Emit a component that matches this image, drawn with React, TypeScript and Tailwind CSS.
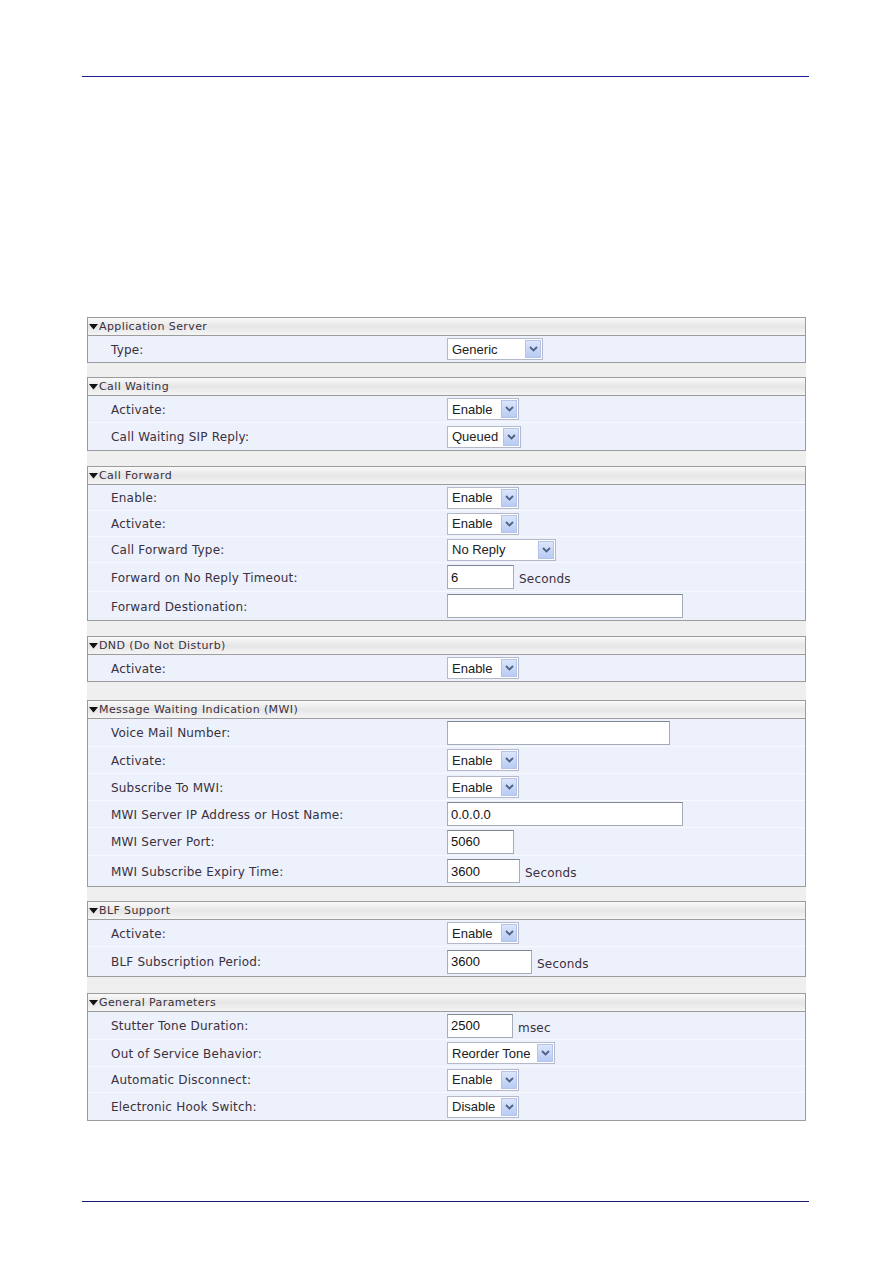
import React from "react";

type Row = {
  label: string;
  kind: "select" | "input";
  value: string;
  w: number;
  h: number;
  suffix?: string;
};

type Section = { title: string; rows: Row[]; gapAfter: number };

const sections: Section[] = [
  {
    title: "Application Server",
    gapAfter: 16,
    rows: [{ label: "Type:", kind: "select", value: "Generic", w: 96, h: 26 }],
  },
  {
    title: "Call Waiting",
    gapAfter: 17,
    rows: [
      { label: "Activate:", kind: "select", value: "Enable", w: 72, h: 27 },
      { label: "Call Waiting SIP Reply:", kind: "select", value: "Queued", w: 74, h: 27 },
    ],
  },
  {
    title: "Call Forward",
    gapAfter: 17,
    rows: [
      { label: "Enable:", kind: "select", value: "Enable", w: 72, h: 26 },
      { label: "Activate:", kind: "select", value: "Enable", w: 72, h: 26 },
      { label: "Call Forward Type:", kind: "select", value: "No Reply", w: 109, h: 26 },
      { label: "Forward on No Reply Timeout:", kind: "input", value: "6", w: 67, h: 29, suffix: "Seconds" },
      { label: "Forward Destionation:", kind: "input", value: "", w: 236, h: 28 },
    ],
  },
  {
    title: "DND (Do Not Disturb)",
    gapAfter: 20,
    rows: [{ label: "Activate:", kind: "select", value: "Enable", w: 72, h: 26 }],
  },
  {
    title: "Message Waiting Indication (MWI)",
    gapAfter: 16,
    rows: [
      { label: "Voice Mail Number:", kind: "input", value: "", w: 223, h: 28 },
      { label: "Activate:", kind: "select", value: "Enable", w: 72, h: 27 },
      { label: "Subscribe To MWI:", kind: "select", value: "Enable", w: 72, h: 27 },
      { label: "MWI Server IP Address or Host Name:", kind: "input", value: "0.0.0.0", w: 236, h: 27 },
      { label: "MWI Server Port:", kind: "input", value: "5060", w: 67, h: 28 },
      { label: "MWI Subscribe Expiry Time:", kind: "input", value: "3600", w: 73, h: 30, suffix: "Seconds" },
    ],
  },
  {
    title: "BLF Support",
    gapAfter: 18,
    rows: [
      { label: "Activate:", kind: "select", value: "Enable", w: 72, h: 27 },
      { label: "BLF Subscription Period:", kind: "input", value: "3600", w: 85, h: 29, suffix: "Seconds" },
    ],
  },
  {
    title: "General Parameters",
    gapAfter: 0,
    rows: [
      { label: "Stutter Tone Duration:", kind: "input", value: "2500", w: 66, h: 28, suffix: "msec" },
      { label: "Out of Service Behavior:", kind: "select", value: "Reorder Tone", w: 108, h: 27 },
      { label: "Automatic Disconnect:", kind: "select", value: "Enable", w: 72, h: 26 },
      { label: "Electronic Hook Switch:", kind: "select", value: "Disable", w: 72, h: 27 },
    ],
  },
];

function Chevron() {
  return (
    <svg width="9" height="6" viewBox="0 0 9 6">
      <path d="M1 1 L4.5 4.5 L8 1" fill="none" stroke="#4d6185" strokeWidth="1.8" />
    </svg>
  );
}

function SelectBox({ value, w }: { value: string; w: number }) {
  return (
    <div
      className="flex h-[22px] items-center border border-[#b5b8c8] bg-white pl-[4px] pr-[1px]"
      style={{ width: w }}
    >
      <span className="flex-1 whitespace-nowrap text-[13px] leading-none text-[#222]" style={{ fontFamily: '"Liberation Sans", Arial, sans-serif' }}>
        {value}
      </span>
      <div className="flex h-[18px] w-[16px] items-center justify-center border border-[#b3c4ec] bg-gradient-to-b from-[#dce6fb] to-[#b9cbf3]">
        <Chevron />
      </div>
    </div>
  );
}

function InputBox({ value, w }: { value: string; w: number }) {
  return (
    <div
      className="flex h-[24px] items-center border border-[#a5acb5] border-t-[#7c8590] bg-white pl-[3px]"
      style={{ width: w }}
    >
      <span className="text-[13px] leading-none text-[#111]" style={{ fontFamily: '"Liberation Sans", Arial, sans-serif' }}>
        {value}
      </span>
    </div>
  );
}

export default function App() {
  return (
    <div className="relative min-h-[1263px] w-[893px] bg-white" style={{ fontFamily: '"DejaVu Sans", Verdana, sans-serif' }}>
      <div className="pt-[76px]">
        <div className="ml-[82px] h-px w-[727px] bg-[#1c1c96]" />
      </div>
      <div className="ml-[87px] mt-[240px] w-[719px]">
        {sections.map((s, i) => (
          <div key={i}>
            <div className="border border-[#9c9c9c] bg-[#edf1fb]">
              <div className="flex h-[18px] items-center border-b border-[#9c9c9c] bg-gradient-to-b from-[#fafafa] via-[#e6e6e6] to-[#f4f4f4]">
                <svg width="9" height="6" viewBox="0 0 9 6" className="ml-[1px] mr-[1px]">
                  <path d="M0 0 L9 0 L4.5 5.5 Z" fill="#111" />
                </svg>
                <span className="text-[11px] leading-none tracking-[0.4px] text-[#3a3040]">{s.title}</span>
              </div>
              {s.rows.map((r, j) => (
                <div
                  key={j}
                  className={`flex items-center ${j < s.rows.length - 1 ? "border-b border-[#f7f9fe]" : ""}`}
                  style={{ height: r.h }}
                >
                  <div className="w-[359px] pl-[23px] pt-[1px] text-[12px] leading-none tracking-[0.2px] text-[#3a3040]">{r.label}</div>
                  {r.kind === "select" ? (
                    <SelectBox value={r.value} w={r.w} />
                  ) : (
                    <InputBox value={r.value} w={r.w} />
                  )}
                  {r.suffix && (
                    <span className="ml-[5px] mt-[4px] text-[12px] leading-none tracking-[0.2px] text-[#3a3040]">{r.suffix}</span>
                  )}
                </div>
              ))}
            </div>
            {s.gapAfter > 0 && <div className="bg-[#efefef]" style={{ height: s.gapAfter - 2 }} />}
          </div>
        ))}
      </div>
      <div className="absolute left-[82px] top-[1201px] h-px w-[727px] bg-[#1a1a70]" />
    </div>
  );
}
